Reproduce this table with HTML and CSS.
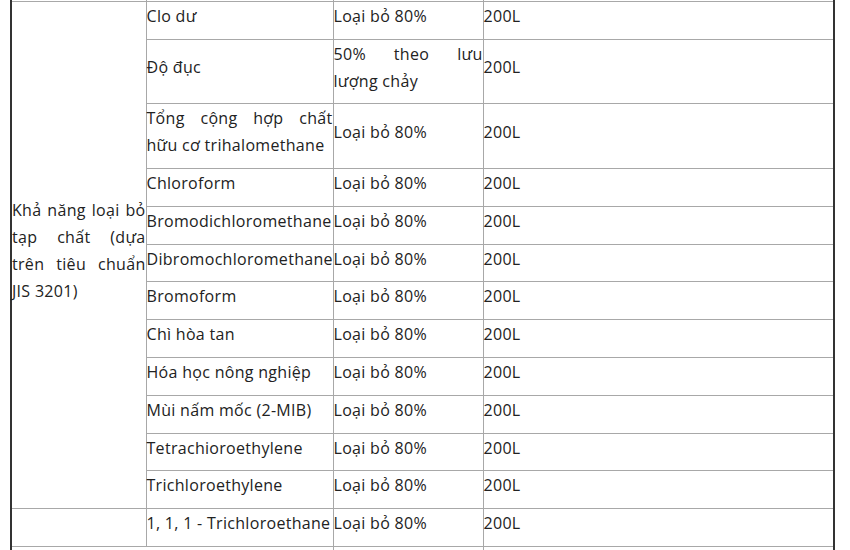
FILE: index.html
```html
<!DOCTYPE html>
<html lang="vi">
<head>
<meta charset="utf-8">
<title>Bảng thông số</title>
<link rel="stylesheet" href="styles.css">
</head>
<body>
<table class="spec">
  <colgroup>
    <col class="c1">
    <col class="c2">
    <col class="c3">
    <col class="c4">
  </colgroup>
  <tbody>
    <tr class="prev"><td></td><td></td><td></td><td></td></tr>
    <tr>
      <td rowspan="12">Khả năng loại bỏ tạp chất (dựa trên tiêu chuẩn JIS 3201)</td>
      <td>Clo dư</td><td>Loại bỏ 80%</td><td>200L</td>
    </tr>
    <tr><td>Độ đục</td><td>50% theo lưu lượng chảy</td><td>200L</td></tr>
    <tr><td>Tổng cộng hợp chất hữu cơ trihalomethane</td><td>Loại bỏ 80%</td><td>200L</td></tr>
    <tr><td>Chloroform</td><td>Loại bỏ 80%</td><td>200L</td></tr>
    <tr><td>Bromodichloromethane</td><td>Loại bỏ 80%</td><td>200L</td></tr>
    <tr><td>Dibromochloromethane</td><td>Loại bỏ 80%</td><td>200L</td></tr>
    <tr><td>Bromoform</td><td>Loại bỏ 80%</td><td>200L</td></tr>
    <tr><td>Chì hòa tan</td><td>Loại bỏ 80%</td><td>200L</td></tr>
    <tr><td>Hóa học nông nghiệp</td><td>Loại bỏ 80%</td><td>200L</td></tr>
    <tr><td>Mùi nấm mốc (2-MIB)</td><td>Loại bỏ 80%</td><td>200L</td></tr>
    <tr><td>Tetrachioroethylene</td><td>Loại bỏ 80%</td><td>200L</td></tr>
    <tr><td>Trichloroethylene</td><td>Loại bỏ 80%</td><td>200L</td></tr>
    <tr>
      <td></td><td>1, 1, 1 - Trichloroethane</td><td>Loại bỏ 80%</td><td>200L</td>
    </tr>
    <tr>
      <td colspan="2"></td><td></td><td></td>
    </tr>
  </tbody>
</table>
</body>
</html>
```

FILE: styles.css
```css
html, body {
  margin: 0;
  padding: 0;
  background: #ffffff;
}

body {
  padding-left: 10px;
  font-family: "Open Sans", "Noto Sans", sans-serif;
  font-size: 16px;
  letter-spacing: 0.3px;
  color: #222222;
}

.spec {
  border-collapse: collapse;
  table-layout: fixed;
  width: 825px;
  margin-top: -10px;
  border-left: 2px solid #333333;
  border-right: 2px solid #333333;
}

.c1 { width: 135px; }
.c2 { width: 187px; }
.c3 { width: 150px; }
.c4 { width: auto; }

.spec td {
  border: 1px solid #a8a8a8;
  padding: 1px 0 9px 0;
  line-height: 26.8px;
  text-align: justify;
  vertical-align: middle;
}

.spec tr.prev td {
  height: 10px;
  padding: 0;
  line-height: 0;
}
```
